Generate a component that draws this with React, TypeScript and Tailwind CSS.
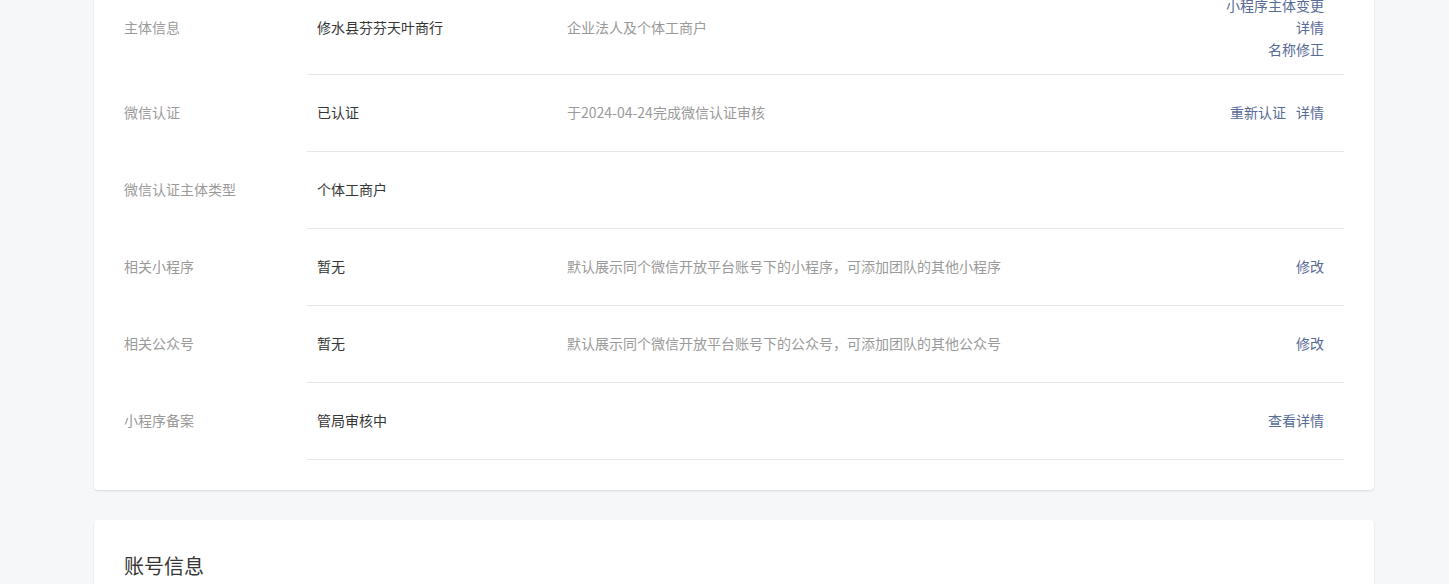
const rows: {
  label: string
  value: string
  desc?: string
  actions?: string[]
  stacked?: boolean
}[] = [
  {
    label: "主体信息",
    value: "修水县芬芬天叶商行",
    desc: "企业法人及个体工商户",
    actions: ["小程序主体变更", "详情", "名称修正"],
    stacked: true,
  },
  {
    label: "微信认证",
    value: "已认证",
    desc: "于2024-04-24完成微信认证审核",
    actions: ["重新认证", "详情"],
  },
  { label: "微信认证主体类型", value: "个体工商户" },
  {
    label: "相关小程序",
    value: "暂无",
    desc: "默认展示同个微信开放平台账号下的小程序，可添加团队的其他小程序",
    actions: ["修改"],
  },
  {
    label: "相关公众号",
    value: "暂无",
    desc: "默认展示同个微信开放平台账号下的公众号，可添加团队的其他公众号",
    actions: ["修改"],
  },
  { label: "小程序备案", value: "管局审核中", actions: ["查看详情"] },
]

export default function App() {
  return (
    <div
      className="min-h-screen bg-[#f6f7f9] overflow-hidden text-[14px] leading-[22px]"
      style={{ fontFamily: '"Noto Sans CJK SC", "Noto Sans", sans-serif' }}
    >
      <div className="ml-[94px] w-[1280px] -mt-[48px] bg-white rounded-[4px] shadow-[0_1px_2px_rgba(0,0,0,0.12)] px-[30px] pt-[30px] pb-[30px]">
        {rows.map((row) => (
          <div key={row.label} className="flex">
            <div className="w-[183px] shrink-0 flex items-center pb-[3px] text-[#9a9a9a]">
              {row.label}
            </div>
            <div className="flex-1 flex items-center min-h-[77px] pt-[12px] pb-[14px] border-b border-[#e7e7eb]">
              <div className="w-[260px] shrink-0 pl-[10px] text-[#353535]">{row.value}</div>
              <div className="flex-1 text-[#9a9a9a]">{row.desc}</div>
              {row.actions && (
                <div
                  className={
                    row.stacked
                      ? "flex flex-col items-end pr-[20px] text-[#576b95]"
                      : "flex gap-[10px] pr-[20px] text-[#576b95]"
                  }
                >
                  {row.actions.map((a) => (
                    <a key={a} href="#" className="hover:underline">
                      {a}
                    </a>
                  ))}
                </div>
              )}
            </div>
          </div>
        ))}
      </div>

      <div className="ml-[94px] w-[1280px] mt-[30px] bg-white rounded-[4px] shadow-[0_1px_2px_rgba(0,0,0,0.12)] px-[30px] pt-[32px] pb-[30px]">
        <h2 className="text-[20px] leading-[28px] text-[#353535]">账号信息</h2>
      </div>
    </div>
  )
}
